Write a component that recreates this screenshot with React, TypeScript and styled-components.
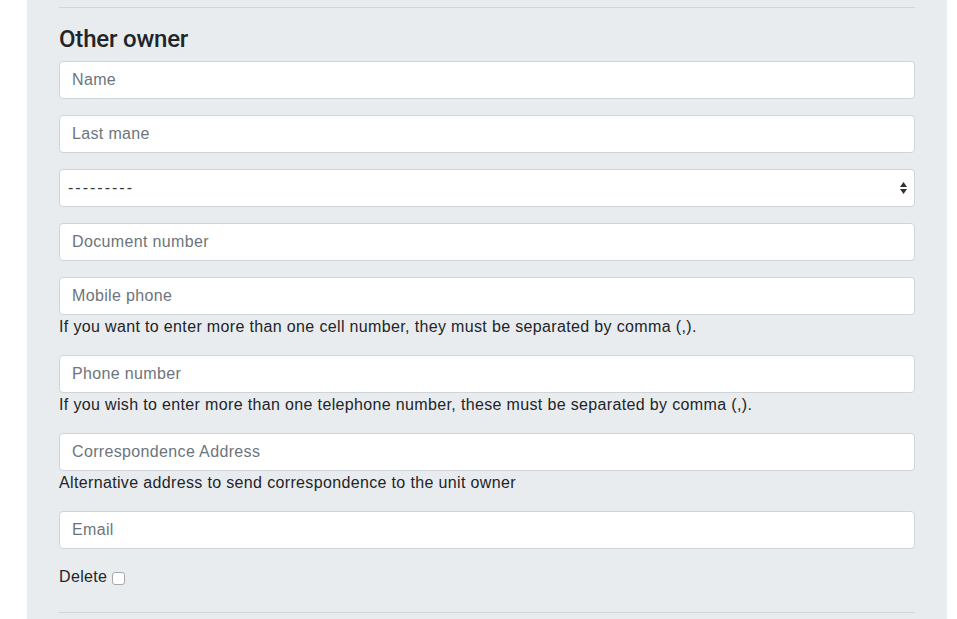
import React from "react";
import styled, { createGlobalStyle } from "styled-components";

const Global = createGlobalStyle`
  html, body { margin: 0; padding: 0; background: #ffffff; }
  body {
    font-family: "Liberation Sans", Arial, sans-serif;
    font-size: 16px;
    line-height: 1.5;
    letter-spacing: 0.35px;
    color: #212529;
  }
  * { box-sizing: border-box; }
`;

const Page = styled.div`
  padding: 0 10px 0 27px;
  width: 957px;
`;

const Panel = styled.div`
  width: 920px;
  min-height: 619px;
  background: #e9ecef;
  padding: 7px 32px 0 32px;
`;

const Rule = styled.hr<{ $bottom?: boolean }>`
  margin: ${(p) => (p.$bottom ? "23px 0 0" : "0 0 16px")};
  border: 0;
  border-top: 1px solid #d3d6d9;
  height: 0;
`;

const Heading = styled.h4`
  margin: 0 0 8px;
  padding-top: 1px;
  height: 29px;
  font-family: Roboto, "Liberation Sans", sans-serif;
  font-size: 24px;
  font-weight: 500;
  line-height: 1.2;
  letter-spacing: -0.2px;
  color: #212529;
`;

const Group = styled.div`
  margin-bottom: 16px;
`;

const Input = styled.input`
  display: block;
  width: 100%;
  height: 38px;
  padding: 6px 12px;
  font-family: inherit;
  font-size: 16px;
  letter-spacing: 0.35px;
  line-height: 1.5;
  color: #495057;
  background: #ffffff;
  border: 1px solid #ced4da;
  border-radius: 4px;
  outline: none;
  &::placeholder {
    color: #6c757d;
    opacity: 1;
  }
`;

const arrows =
  "data:image/svg+xml;utf8," +
  encodeURIComponent(
    `<svg xmlns="http://www.w3.org/2000/svg" width="7" height="12" viewBox="0 0 7 12"><path d="M3.5 0L7 5H0z" fill="#333"/><path d="M3.5 12L7 7H0z" fill="#333"/></svg>`
  );

const Select = styled.select`
  display: block;
  width: 100%;
  height: 38px;
  padding: 6px 24px 6px 8px;
  font-family: inherit;
  font-size: 16px;
  letter-spacing: 2px;
  line-height: 1.5;
  color: #343a40;
  background: #ffffff url("${arrows}") no-repeat right 7px center;
  border: 1px solid #ced4da;
  border-radius: 4px;
  appearance: none;
  -webkit-appearance: none;
  outline: none;
`;

const Help = styled.div`
  font-size: 16px;
  line-height: 24px;
  color: #212529;
`;

const CheckRow = styled.label`
  display: flex;
  align-items: center;
  gap: 5px;
  height: 24px;
  font-size: 16px;
`;

const Check = styled.input`
  width: 13px;
  height: 13px;
  margin: 2px 0 0;
  appearance: none;
  -webkit-appearance: none;
  background: #ffffff;
  border: 1px solid #a8a8a8;
  border-radius: 3px;
`;

type Field = { placeholder: string; help?: string };

const fieldsAfter: Field[] = [
  { placeholder: "Document number" },
  {
    placeholder: "Mobile phone",
    help: "If you want to enter more than one cell number, they must be separated by comma (,).",
  },
  {
    placeholder: "Phone number",
    help: "If you wish to enter more than one telephone number, these must be separated by comma (,).",
  },
  {
    placeholder: "Correspondence Address",
    help: "Alternative address to send correspondence to the unit owner",
  },
  { placeholder: "Email" },
];

export default function App() {
  return (
    <>
      <Global />
      <Page>
        <Panel>
          <Rule />
          <Heading>Other owner</Heading>
          <Group>
            <Input type="text" placeholder="Name" />
          </Group>
          <Group>
            <Input type="text" placeholder="Last mane" />
          </Group>
          <Group>
            <Select defaultValue="">
              <option value="">---------</option>
            </Select>
          </Group>
          {fieldsAfter.map((f) => (
            <Group key={f.placeholder}>
              <Input type="text" placeholder={f.placeholder} />
              {f.help && <Help>{f.help}</Help>}
            </Group>
          ))}
          <CheckRow>
            <span>Delete</span>
            <Check type="checkbox" />
          </CheckRow>
          <Rule $bottom />
        </Panel>
      </Page>
    </>
  );
}
